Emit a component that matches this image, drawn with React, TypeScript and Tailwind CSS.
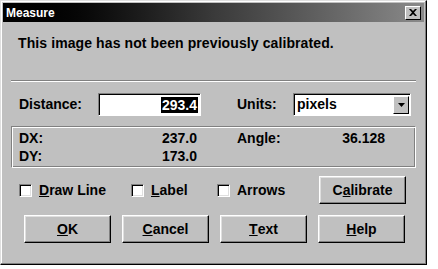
const font = { fontFamily: '"Liberation Sans", Arial, sans-serif' };

function Btn({ children, w = "w-[87px]" }: { children: React.ReactNode; w?: string }) {
  return (
    <div
      className={`${w} h-[28px] flex items-center justify-center bg-[#c0c0c0] border border-t-white border-l-white border-r-black border-b-black shadow-[inset_-1px_-1px_#808080,inset_1px_1px_#dfdfdf] text-[14px] font-bold text-black`}
    >
      {children}
    </div>
  );
}

function Check({ children }: { children: React.ReactNode }) {
  return (
    <div className="flex items-center gap-[7px] text-[14px] font-bold">
      <span className="w-[13px] h-[13px] bg-white border border-t-[#808080] border-l-[#808080] border-r-white border-b-white shadow-[inset_1px_1px_#000,inset_-1px_-1px_#dfdfdf]" />
      <span>{children}</span>
    </div>
  );
}

export default function App() {
  return (
    <div className="w-[438px] h-[269px] bg-white" style={font}>
      <div className="w-[427px] h-[265px] bg-[#c0c0c0] border border-t-[#dfdfdf] border-l-[#dfdfdf] border-r-black border-b-black shadow-[inset_-1px_-1px_#808080,inset_1px_1px_#fff] p-[2px] flex flex-col text-black">
        {/* title bar */}
        <div className="h-[19px] bg-gradient-to-r from-black via-[#3a3a3a] to-[#8a8a8a] flex items-center justify-between pl-[3px] pr-[3px]">
          <span className="text-white text-[12px] font-bold">Measure</span>
          <div className="w-[16px] h-[14px] bg-[#c0c0c0] border border-t-white border-l-white border-r-black border-b-black flex items-center justify-center">
            <svg width="8" height="7" viewBox="0 0 8 7">
              <path d="M0 0h2l2 2 2-2h2L5 3.5 8 7H6L4 5 2 7H0l3-3.5z" fill="#000" />
            </svg>
          </div>
        </div>

        <div className="pl-[15px] mt-[13px] text-[14px] font-bold leading-[17px] tracking-[0.1px]">
          This image has not been previously calibrated.
        </div>

        {/* separator */}
        <div className="mx-[8px] mt-[28px] h-[2px] border-t border-t-[#808080] border-b border-b-white" />

        {/* distance row */}
        <div className="flex items-center mt-[11px] pl-[16px] text-[14px] font-bold">
          <span className="w-[79px]">Distance:</span>
          <div className="w-[103px] h-[23px] bg-white border border-t-[#808080] border-l-[#808080] border-r-white border-b-white shadow-[inset_1px_1px_#000] flex items-center justify-end pr-[2px]">
            <span className="bg-black text-white px-[1px] leading-[16px]">293.4</span>
          </div>
          <span className="ml-[36px] w-[56px]">Units:</span>
          <div className="w-[118px] h-[23px] bg-white border border-t-[#808080] border-l-[#808080] border-r-white border-b-white shadow-[inset_1px_1px_#000] flex items-center justify-between pl-[3px] pr-[1px]">
            <span>pixels</span>
            <div className="w-[16px] h-[18px] bg-[#c0c0c0] border border-t-white border-l-white border-r-black border-b-black flex items-center justify-center">
              <svg width="7" height="4" viewBox="0 0 7 4">
                <path d="M0 0h7L3.5 4z" fill="#000" />
              </svg>
            </div>
          </div>
        </div>

        {/* group box */}
        <div className="mx-[8px] mt-[10px] h-[42px] border border-t-[#808080] border-l-[#808080] border-r-white border-b-white shadow-[inset_1px_1px_#fff,inset_-1px_-1px_#808080] pl-[7px] pt-[2px] text-[14px] font-bold leading-[18px]">
          <div className="flex">
            <span className="w-[100px]">DX:</span>
            <span className="w-[78px] text-right">237.0</span>
            <span className="ml-[40px] w-[100px]">Angle:</span>
            <span className="w-[48px] text-right">36.128</span>
          </div>
          <div className="flex">
            <span className="w-[100px]">DY:</span>
            <span className="w-[78px] text-right">173.0</span>
          </div>
        </div>

        {/* checkbox row */}
        <div className="flex items-center mt-[8px] pl-[16px]">
          <div className="w-[112px]">
            <Check>
              <span className="underline">D</span>raw Line
            </Check>
          </div>
          <div className="w-[86px]">
            <Check>
              <span className="underline">L</span>abel
            </Check>
          </div>
          <div className="w-[102px]">
            <Check>Arrows</Check>
          </div>
          <Btn>
            C<span className="underline">a</span>librate
          </Btn>
        </div>

        {/* buttons */}
        <div className="flex items-center gap-[11px] mt-[11px] pl-[21px]">
          <Btn>
            <span className="underline">O</span>K
          </Btn>
          <Btn>
            <span className="underline">C</span>ancel
          </Btn>
          <Btn>
            <span className="underline">T</span>ext
          </Btn>
          <Btn>
            <span className="underline">H</span>elp
          </Btn>
        </div>
      </div>
    </div>
  );
}
